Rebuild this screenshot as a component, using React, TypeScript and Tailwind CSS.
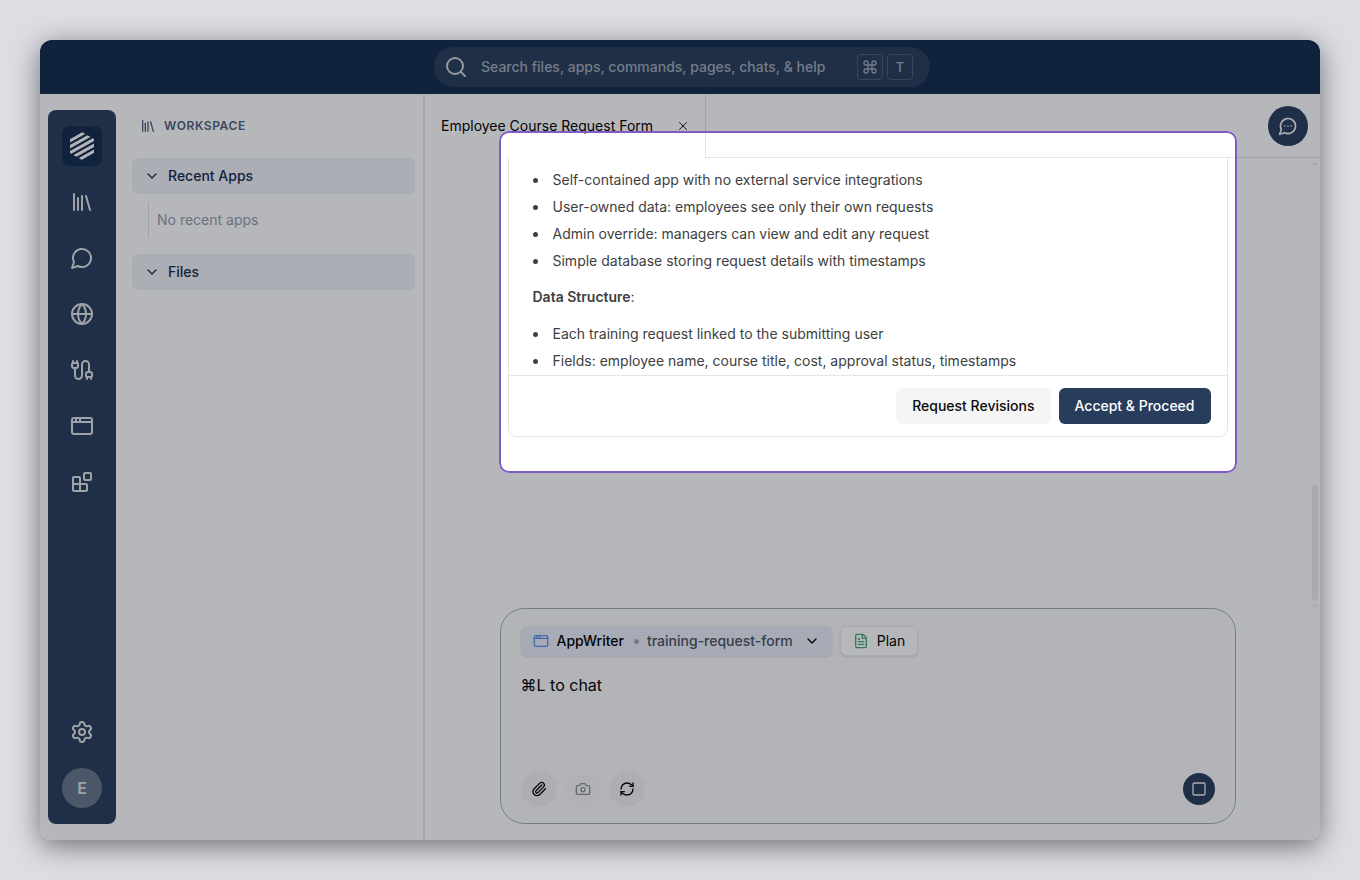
import React, { useState } from 'react';
import {
  AppWindow,
  Cable,
  Camera,
  ChevronDown,
  Command,
  FileText,
  Globe,
  Library,
  Paperclip,
  RefreshCw,
  Search,
  Settings,
  Square,
  X,
} from 'lucide-react';

interface IconProps {
  size?: number;
  dots?: boolean;
}

function ChatBubble({ size = 24, dots = false }: IconProps) {
  return (
    <svg width={size} height={size} viewBox="0 0 24 24" fill="none" stroke="currentColor" strokeWidth={2} strokeLinecap="round" strokeLinejoin="round">
      <path d="M7.9 20A9 9 0 1 0 4 16.1L2 22Z" />
      {dots && <path d="M8 12h.01M12 12h.01M16 12h.01" />}
    </svg>
  );
}

function BlocksIcon({ size = 24 }: IconProps) {
  return (
    <svg width={size} height={size} viewBox="0 0 24 24" fill="none" stroke="currentColor" strokeWidth={2} strokeLinecap="round" strokeLinejoin="round">
      <rect width="7" height="7" x="14" y="3" rx="1" />
      <path d="M10 21V8a1 1 0 0 0-1-1H4a1 1 0 0 0-1 1v12a1 1 0 0 0 1 1h12a1 1 0 0 0 1-1v-5a1 1 0 0 0-1-1H3" />
    </svg>
  );
}

function Logo() {
  return (
    <svg width="24" height="28" viewBox="0 0 24 28" fill="none" stroke="#fbfbfc" strokeWidth="3">
      <defs>
        <clipPath id="hex">
          <path d="M12 0 24 7v14l-12 7L0 21V7Z" />
        </clipPath>
      </defs>
      <g clipPath="url(#hex)">
        <path d="M-2 9.800 26-5.800M-2 15.800 26 .2M-2 21.800 26 6.200M-2 27.800 26 12.200M-2 33.800 26 18.200" />
      </g>
    </svg>
  );
}

const navItems = [
  { label: 'Library', icon: <Library size={24} /> },
  { label: 'Chats', icon: <ChatBubble /> },
  { label: 'Web', icon: <Globe size={24} /> },
  { label: 'Integrations', icon: <Cable size={24} /> },
  { label: 'Apps', icon: <AppWindow size={24} /> },
  { label: 'Blocks', icon: <BlocksIcon /> },
];

const features = [
  'Self-contained app with no external service integrations',
  'User-owned data: employees see only their own requests',
  'Admin override: managers can view and edit any request',
  'Simple database storing request details with timestamps',
];

const dataStructure = [
  'Each training request linked to the submitting user',
  'Fields: employee name, course title, cost, approval status, timestamps',
];

function TopBar() {
  return (
    <header className="h-[54px] shrink-0 bg-[#132a4d] flex items-center justify-center pl-1">
      <label className="w-[496px] h-10 rounded-full bg-[#283d5b] flex items-center gap-[13px] pl-[10px] pr-[17px] text-[#a0abba]">
        <Search size={24} className="text-[#cdd1d8] shrink-0" />
        <input
          type="text"
          aria-label="Search"
          placeholder="Search files, apps, commands, pages, chats, & help"
          className="flex-1 min-w-0 bg-transparent outline-none text-sm font-medium placeholder:text-[#a0abba]"
        />
        <span className="flex gap-1">
          <kbd className="w-[26px] h-[26px] rounded border border-[#4c5f7a] flex items-center justify-center">
            <Command size={16} />
          </kbd>
          <kbd className="w-[26px] h-[26px] rounded border border-[#4c5f7a] flex items-center justify-center font-sans text-sm font-medium">T</kbd>
        </span>
      </label>
    </header>
  );
}

function NavRail() {
  return (
    <nav className="w-[68px] shrink-0 ml-2 my-4 py-4 rounded-lg bg-[#283d5b] flex flex-col items-center gap-4 text-[#dfe2e6]">
      <a href="#home" aria-label="Home" className="size-10 rounded-lg bg-[#132a4d] flex items-center justify-center">
        <Logo />
      </a>
      {navItems.map((item) => (
        <button key={item.label} type="button" aria-label={item.label} className="size-10 flex items-center justify-center">
          {item.icon}
        </button>
      ))}
      <button type="button" aria-label="Settings" className="size-10 mt-auto flex items-center justify-center">
        <Settings size={24} />
      </button>
      <button type="button" aria-label="Account" className="size-10 rounded-full bg-[#68778c] flex items-center justify-center font-semibold">
        E
      </button>
    </nav>
  );
}

function SectionHeader({ title, open, onToggle }: { title: string; open: boolean; onToggle: () => void }) {
  return (
    <button
      type="button"
      aria-expanded={open}
      onClick={onToggle}
      className="w-full h-9 px-3 rounded-md bg-[#f0f3f8] flex items-center gap-2 text-sm font-medium text-[#132a4d]"
    >
      <ChevronDown size={16} className={open ? '' : '-rotate-90'} />
      {title}
    </button>
  );
}

function WorkspacePanel() {
  const [appsOpen, setAppsOpen] = useState(true);
  const [filesOpen, setFilesOpen] = useState(true);

  return (
    <aside className="w-[309px] shrink-0 py-4 pl-4 pr-2 border-r-2 border-[#e9eaed]">
      <h2 className="h-8 px-2 mb-4 flex items-center gap-2 text-xs font-semibold tracking-wider text-[#4f607a]">
        <Library size={16} />
        WORKSPACE
      </h2>
      <SectionHeader title="Recent Apps" open={appsOpen} onToggle={() => setAppsOpen(!appsOpen)} />
      {appsOpen && (
        <p className="ml-4 my-2 h-9 pl-2 border-l border-[#e0e3e9] flex items-center text-sm text-[#949cab]">No recent apps</p>
      )}
      <div className="mt-4">
        <SectionHeader title="Files" open={filesOpen} onToggle={() => setFilesOpen(!filesOpen)} />
      </div>
    </aside>
  );
}

function TabBar() {
  return (
    <div className="h-16 shrink-0 flex">
      <div className="w-[281px] pl-4 pr-[15px] border-r border-[#e4e5e8] flex items-center justify-between text-sm text-black">
        <span>Employee Course Request Form</span>
        <button type="button" aria-label="Close tab">
          <X size={14} strokeWidth={1.5} />
        </button>
      </div>
      <div className="flex-1 pr-3 border-b border-[#e4e5e8] flex items-center justify-end">
        <button type="button" aria-label="Open chat" className="size-10 rounded-full bg-[#283d5b] text-[#eef0f3] flex items-center justify-center">
          <ChatBubble size={20} dots />
        </button>
      </div>
    </div>
  );
}

function BulletList({ items }: { items: string[] }) {
  return (
    <ul className="list-disc pl-4 space-y-[3px]">
      {items.map((text) => (
        <li key={text} className="pl-1">{text}</li>
      ))}
    </ul>
  );
}

function PlanCard() {
  return (
    <section className="w-full max-w-[720px] border border-t-0 border-[#e5e5e5] rounded-b-lg">
      <div className="px-6 pt-[10px] pb-[2px] text-sm leading-6 text-[#404040]">
        <BulletList items={features} />
        <p className="mt-3 mb-[13px]">
          <strong className="font-semibold">Data Structure</strong>:
        </p>
        <BulletList items={dataStructure} />
      </div>
      <div className="border-t border-[#e5e5e5] px-4 py-3 flex justify-end gap-2 text-sm font-medium">
        <button type="button" className="h-9 px-4 rounded-md bg-[#f5f5f5] text-[#0a0a0a]">Request Revisions</button>
        <button type="button" className="h-9 px-4 rounded-md bg-[#283d5b] text-white">Accept &amp; Proceed</button>
      </div>
    </section>
  );
}

function Composer() {
  return (
    <form className="w-full max-w-[736px] px-5 py-4 rounded-3xl border border-[#a3acbd] bg-[#fbfbfc] flex flex-col" onSubmit={(e) => e.preventDefault()}>
      <div className="h-8 flex items-center gap-2 text-sm">
        <button type="button" className="h-[30px] px-3 rounded-md bg-[#e8eef9] shadow-sm flex items-center gap-2 font-medium text-black">
          <AppWindow size={16} className="text-[#5c90ec]" />
          AppWriter
          <span className="size-[5px] ml-0.5 rounded-full bg-[#a3a8b3]" />
          <span className="text-[#4b5260]">training-request-form</span>
          <ChevronDown size={16} className="ml-[3px]" />
        </button>
        <button type="button" className="h-[30px] px-3 rounded-md bg-white border border-[#ececef] shadow-sm flex items-center gap-2 text-black">
          <FileText size={16} className="text-[#45a87a]" />
          Plan
        </button>
      </div>
      <textarea
        aria-label="Message"
        placeholder="⌘L to chat"
        className="mt-4 h-[98px] resize-none bg-transparent outline-none text-base text-black placeholder:text-black"
      />
      <div className="flex items-center gap-2 text-black">
        <button type="button" aria-label="Attach file" className="size-9 rounded-full bg-[#f3f3f5] flex items-center justify-center">
          <Paperclip size={16} />
        </button>
        <button type="button" aria-label="Take screenshot" className="size-9 rounded-full bg-[#f8f8f9] text-[#8d8f94] flex items-center justify-center">
          <Camera size={16} />
        </button>
        <button type="button" aria-label="Refresh" className="size-9 rounded-full bg-[#f3f3f5] flex items-center justify-center">
          <RefreshCw size={16} />
        </button>
        <button type="button" aria-label="Stop" className="size-8 ml-auto rounded-full bg-[#283d5b] text-[#eef0f3] flex items-center justify-center">
          <Square size={16} />
        </button>
      </div>
    </form>
  );
}

// Dims the whole window apart from the framed area
function Spotlight() {
  return (
    <div className="absolute inset-x-0 top-[37px] z-10 pr-[10px] flex justify-center pointer-events-none">
      <div className="w-full max-w-[738px] h-[342px] rounded-[10px] border-2 border-[#7f5bc4] shadow-[0_0_0_3000px_rgba(12,16,26,0.3)]" />
    </div>
  );
}

export default function App() {
  return (
    <div className="h-screen p-10 bg-[#dcdee4] flex font-['Inter',sans-serif]">
      <div className="flex-1 min-w-0 rounded-xl shadow-[0_6px_28px_rgba(0,0,0,0.5)] flex">
        <div className="flex-1 min-w-0 rounded-xl overflow-hidden bg-white flex flex-col">
          <TopBar />
          <div className="flex-1 min-h-0 flex">
            <NavRail />
            <WorkspacePanel />
            <main className="relative flex-1 min-w-0 flex flex-col">
              <TabBar />
              <div className="flex-1 min-h-0 flex">
                <div className="flex-1 min-w-0 overflow-hidden flex justify-center items-start">
                  <PlanCard />
                </div>
                {/* Scrollbar */}
                <div className="w-[10px] pt-1 flex flex-col items-center justify-between">
                  <span className="border-x-3 border-b-3 border-x-transparent border-b-[#e8e8ea]" />
                  <span className="w-[6px] h-[116px] mt-auto mb-1 rounded-full bg-[#eeeef0]" />
                  <span className="border-x-3 border-t-3 border-x-transparent border-t-[#e8e8ea]" />
                </div>
              </div>
              <div className="pb-4 pr-[10px] flex justify-center">
                <Composer />
              </div>
              <Spotlight />
            </main>
          </div>
        </div>
      </div>
    </div>
  );
}
